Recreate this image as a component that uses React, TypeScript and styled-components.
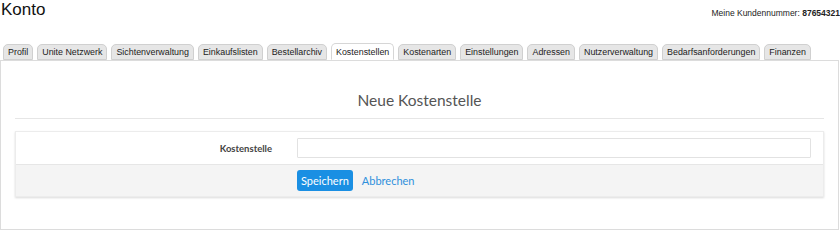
import React, { useState } from 'react';
import styled, { createGlobalStyle } from 'styled-components';

const GlobalStyle = createGlobalStyle`
  html, body {
    margin: 0;
    padding: 0;
    background: #fff;
  }
  body {
    font-family: 'Liberation Sans', Arial, sans-serif;
    color: #222;
  }
`;

const Page = styled.div`
  width: 840px;
  height: 230px;
  overflow: hidden;
`;

const Header = styled.header`
  display: flex;
  justify-content: space-between;
  align-items: flex-start;
  height: 44px;
  padding-left: 1px;
`;

const PageTitle = styled.h1`
  margin: 0;
  font-size: 17px;
  font-weight: normal;
  line-height: 20px;
  color: #111;
`;

const CustomerNumber = styled.div`
  font-size: 8.5px;
  line-height: 10px;
  margin-top: 8px;
  color: #222;
  white-space: nowrap;

  b {
    font-weight: bold;
  }
`;

const TabBar = styled.nav`
  display: flex;
  gap: 4px;
  padding-left: 3px;
  height: 16px;
  position: relative;
  z-index: 1;
`;

const Tab = styled.button<{ $active?: boolean }>`
  margin: 0;
  height: ${(p) => (p.$active ? '17px' : '16px')};
  margin-top: ${(p) => (p.$active ? '-1px' : '0')};
  padding: 0 4px;
  border: 1px solid ${(p) => (p.$active ? '#d6d6d6' : '#d0d0d0')};
  border-bottom: ${(p) => (p.$active ? '1px solid #fff' : '1px solid #d0d0d0')};
  border-radius: 5px 5px 0 0;
  background: ${(p) => (p.$active ? '#fff' : '#e6e6e6')};
  font-family: 'Liberation Sans', Arial, sans-serif;
  font-size: 8.9px;
  line-height: 14px;
  color: #222;
  cursor: pointer;
  white-space: nowrap;
`;

const Panel = styled.section`
  border: 1px solid #dcdcdc;
  margin-right: 1px;
  height: 170px;
  box-sizing: border-box;
  padding: 0 14px;
  font-family: Lato, 'Open Sans', sans-serif;
`;

const Heading = styled.h2`
  margin: 0;
  padding-top: 29px;
  padding-bottom: 8px;
  text-align: center;
  font-size: 15.5px;
  font-weight: normal;
  line-height: 20px;
  color: #555;
  border-bottom: 1px solid #e6e6e6;
`;

const Card = styled.form`
  margin-top: 12px;
  border: 1px solid #ececec;
  box-shadow: 0 1px 2px rgba(0, 0, 0, 0.15);
  background: #fff;
`;

const FieldRow = styled.div`
  display: grid;
  grid-template-columns: 281px 1fr;
  align-items: center;
  padding: 6px 0;
`;

const Label = styled.label`
  text-align: right;
  padding-right: 25px;
  font-size: 9.5px;
  font-weight: bold;
  color: #444;
`;

const Input = styled.input`
  height: 20px;
  margin-right: 12px;
  box-sizing: border-box;
  border: 1px solid #e2e2e2;
  border-radius: 1px;
  padding: 0 6px;
  font-family: inherit;
  font-size: 11px;
  outline: none;
`;

const Footer = styled.div`
  display: grid;
  grid-template-columns: 281px 1fr;
  background: #f4f4f4;
  border-top: 1px solid #e6e6e6;
  padding: 5px 0;
`;

const Actions = styled.div`
  display: flex;
  align-items: center;
  gap: 9px;
`;

const PrimaryButton = styled.button`
  height: 21px;
  padding: 0 4px;
  border: none;
  border-radius: 3px;
  background: #1a8fe3;
  color: #fff;
  font-family: inherit;
  font-size: 11px;
  cursor: pointer;
`;

const LinkButton = styled.a`
  color: #2f90dc;
  font-size: 11px;
  text-decoration: none;
  cursor: pointer;
`;

const tabs = [
  'Profil',
  'Unite Netzwerk',
  'Sichtenverwaltung',
  'Einkaufslisten',
  'Bestellarchiv',
  'Kostenstellen',
  'Kostenarten',
  'Einstellungen',
  'Adressen',
  'Nutzerverwaltung',
  'Bedarfsanforderungen',
  'Finanzen',
];

const App = () => {
  const [active, setActive] = useState('Kostenstellen');
  const [name, setName] = useState('');

  return (
    <Page>
      <GlobalStyle />
      <Header>
        <PageTitle>Konto</PageTitle>
        <CustomerNumber>
          Meine Kundennummer: <b>87654321</b>
        </CustomerNumber>
      </Header>
      <TabBar>
        {tabs.map((t) => (
          <Tab key={t} $active={t === active} onClick={() => setActive(t)}>
            {t}
          </Tab>
        ))}
      </TabBar>
      <Panel>
        <Heading>Neue Kostenstelle</Heading>
        <Card onSubmit={(e: React.FormEvent<HTMLFormElement>) => e.preventDefault()}>
          <FieldRow>
            <Label htmlFor="kostenstelle">Kostenstelle</Label>
            <Input
              id="kostenstelle"
              value={name}
              onChange={(e: React.ChangeEvent<HTMLInputElement>) => setName(e.target.value)}
            />
          </FieldRow>
          <Footer>
            <span />
            <Actions>
              <PrimaryButton type="submit">Speichern</PrimaryButton>
              <LinkButton onClick={() => setName('')}>Abbrechen</LinkButton>
            </Actions>
          </Footer>
        </Card>
      </Panel>
    </Page>
  );
};

export default App;
